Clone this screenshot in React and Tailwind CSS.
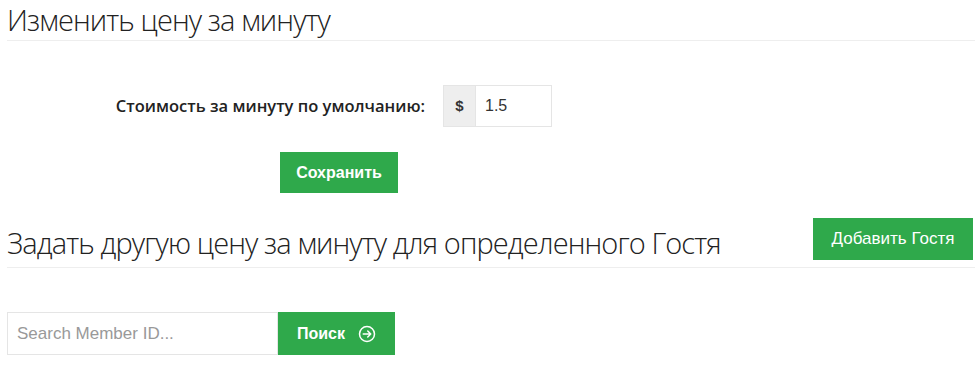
export default function App() {
    return (
        <div className="w-[980px] h-[369px] bg-white pl-[7px] pr-[5px] overflow-hidden"
            style={{ fontFamily: "'Open Sans', sans-serif" }}>
            <h2 className="text-[29px] font-light leading-[40px] text-[#222] tracking-[-0.9px] border-b border-[#eee]">
                Изменить цену за минуту
            </h2>

            <div className="flex items-center mt-[44px]">
                <label className="w-[436px] text-right pr-[18px] text-[16.5px] font-semibold text-[#222]">
                    Стоимость за минуту по умолчанию:
                </label>
                <div className="flex h-[42px]">
                    <span className="w-[32px] flex items-center justify-center bg-[#eee] border border-[#e5e5e5] border-r-0 text-[15px] font-bold text-[#333]"
                        style={{ fontFamily: "'Liberation Sans', Arial, sans-serif" }}>$</span>
                    <input
                        defaultValue="1.5"
                        className="w-[77px] border border-[#e5e5e5] px-[9px] text-[16px] text-[#333] outline-none"
                        style={{ fontFamily: "'Liberation Sans', Arial, sans-serif" }}
                    />
                </div>
            </div>

            <div className="pl-[273px] mt-[25px]">
                <button className="w-[118px] h-[41px] bg-[#2fa94b] text-white text-[16px] font-bold"
                    style={{ fontFamily: "'Liberation Sans', Arial, sans-serif" }}>
                    Сохранить
                </button>
            </div>

            <div className="flex items-end justify-between border-b border-[#eee] mt-[25px] h-[50px]">
                <h2 className="text-[29px] font-light leading-[40px] text-[#222] tracking-[-0.9px] pb-[4px]">
                    Задать другую цену за минуту для определенного Гостя
                </h2>
                <button className="w-[160px] h-[42px] bg-[#2fa94b] text-white text-[17px] mb-[7px] mr-[2px]"
                    style={{ fontFamily: "'Liberation Sans', Arial, sans-serif" }}>
                    Добавить Гостя
                </button>
            </div>

            <div className="flex mt-[44px] h-[43px]" style={{ fontFamily: "'Liberation Sans', Arial, sans-serif" }}>
                <input
                    placeholder="Search Member ID..."
                    className="w-[271px] border border-[#e5e5e5] px-[9px] text-[17px] text-[#333] placeholder:text-[#999] outline-none"
                />
                <button className="w-[117px] bg-[#2fa94b] text-white text-[16px] font-bold flex items-center justify-center gap-[13px]">
                    Поиск
                    <svg width="18" height="18" viewBox="0 0 24 24" fill="none" stroke="currentColor" strokeWidth="2" strokeLinecap="round" strokeLinejoin="round">
                        <circle cx="12" cy="12" r="10" />
                        <path d="M7 12h10M13 8l4 4-4 4" />
                    </svg>
                </button>
            </div>
        </div>
    );
}
